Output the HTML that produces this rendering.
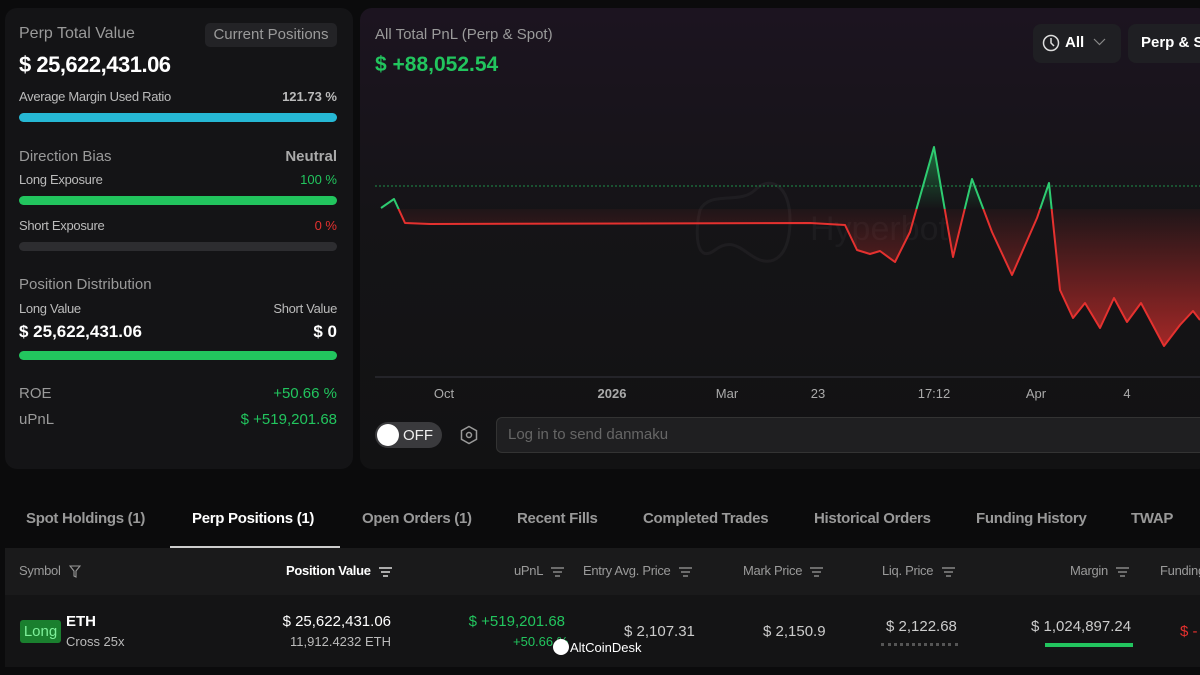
<!DOCTYPE html>
<html><head><meta charset="utf-8"><style>
*{margin:0;padding:0;box-sizing:border-box}
body{width:1200px;height:675px;overflow:hidden;background:#0b0b0c;font-family:"Liberation Sans",sans-serif;color:#ddd;position:relative}
.abs{position:absolute;white-space:nowrap}
.card{position:absolute;border-radius:12px}
.g{color:#22c55e}.r{color:#e5312f}.m{color:#9a9a9a}
.bar{position:absolute;height:9px;border-radius:5px}
.th{position:absolute;top:563px;font-size:13px;color:#9a9a9a;letter-spacing:-0.3px}
.fi{display:inline-block;vertical-align:middle;margin-left:5px}
.tab{position:absolute;top:510px;font-size:15px;color:#999;letter-spacing:-0.3px;font-weight:bold}
</style></head><body>
<div class="card" style="left:5px;top:8px;width:348px;height:461px;background:#141416"></div>
<div class="card" style="left:360px;top:8px;width:850px;height:461px;background:linear-gradient(180deg,#1c1420 0%,#151417 45%,#121213 100%)"></div>

<div class="abs m" style="left:19px;top:25px;font-size:16px">Perp Total Value</div>
<div class="abs" style="left:205px;top:23px;width:132px;height:24px;background:#232326;border-radius:5px;font-size:15px;color:#9a9a9a;text-align:center;line-height:24px">Current Positions</div>
<div class="abs" style="left:19px;top:52px;font-size:22px;font-weight:bold;color:#fff;letter-spacing:-0.5px">$ 25,622,431.06</div>
<div class="abs" style="left:19px;top:89px;font-size:13px;color:#bbb;letter-spacing:-0.3px">Average Margin Used Ratio</div>
<div class="abs" style="right:863px;top:89px;font-size:13px;color:#bbb;font-weight:bold">121.73 %</div>
<div class="bar" style="left:19px;top:113px;width:318px;background:#26b8d4"></div>
<div class="abs m" style="left:19px;top:148px;font-size:15px">Direction Bias</div>
<div class="abs" style="right:863px;top:148px;font-size:15px;font-weight:bold;color:#aaa">Neutral</div>
<div class="abs" style="left:19px;top:172px;font-size:13px;color:#bbb;letter-spacing:-0.3px">Long Exposure</div>
<div class="abs g" style="right:863px;top:172px;font-size:13px">100 %</div>
<div class="bar" style="left:19px;top:196px;width:318px;background:#22c55e"></div>
<div class="abs" style="left:19px;top:218px;font-size:13px;color:#bbb;letter-spacing:-0.3px">Short Exposure</div>
<div class="abs r" style="right:863px;top:218px;font-size:13px">0 %</div>
<div class="bar" style="left:19px;top:242px;width:318px;background:#2d2d30"></div>
<div class="abs m" style="left:19px;top:276px;font-size:15px">Position Distribution</div>
<div class="abs" style="left:19px;top:301px;font-size:13px;color:#bbb;letter-spacing:-0.3px">Long Value</div>
<div class="abs" style="right:863px;top:301px;font-size:13px;color:#bbb;letter-spacing:-0.3px">Short Value</div>
<div class="abs" style="left:19px;top:322px;font-size:17px;font-weight:bold;color:#fff">$ 25,622,431.06</div>
<div class="abs" style="right:863px;top:322px;font-size:17px;font-weight:bold;color:#fff">$ 0</div>
<div class="bar" style="left:19px;top:351px;width:318px;background:#22c55e"></div>
<div class="abs m" style="left:19px;top:385px;font-size:15px">ROE</div>
<div class="abs g" style="right:863px;top:385px;font-size:15px">+50.66 %</div>
<div class="abs m" style="left:19px;top:411px;font-size:15px">uPnL</div>
<div class="abs g" style="right:863px;top:411px;font-size:15px">$ +519,201.68</div>

<div class="abs m" style="left:375px;top:26px;font-size:15px">All Total PnL (Perp &amp; Spot)</div>
<div class="abs g" style="left:375px;top:53px;font-size:21px;font-weight:bold">$ +88,052.54</div>
<div class="abs" style="left:1033px;top:24px;width:88px;height:39px;background:#1f1f23;border-radius:8px"></div>
<svg class="abs" style="left:1042px;top:34px" width="18" height="18" viewBox="0 0 18 18"><circle cx="9" cy="9" r="7.5" fill="none" stroke="#ddd" stroke-width="1.5"/><path d="M9 4v5l3 3" fill="none" stroke="#ddd" stroke-width="1.5"/></svg>
<div class="abs" style="left:1065px;top:34px;font-size:15px;font-weight:bold;color:#fff">All</div>
<svg class="abs" style="left:1093px;top:38px" width="13" height="9"><path d="M1 1l5.5 5.5L12 1" fill="none" stroke="#888" stroke-width="1.2"/></svg>
<div class="abs" style="left:1128px;top:24px;width:90px;height:39px;background:#1f1f23;border-radius:8px"></div>
<div class="abs" style="left:1141px;top:34px;font-size:15px;font-weight:bold;color:#fff">Perp &amp; Spot</div>

<svg class="abs" style="left:0;top:0" width="1200" height="470">
<defs>
<linearGradient id="rf" x1="0" y1="209" x2="0" y2="350" gradientUnits="userSpaceOnUse"><stop offset="0" stop-color="#e5312f" stop-opacity="0.05"/><stop offset="1" stop-color="#e5312f" stop-opacity="0.7"/></linearGradient>
<linearGradient id="gf" x1="0" y1="147" x2="0" y2="209" gradientUnits="userSpaceOnUse"><stop offset="0" stop-color="#22c55e" stop-opacity="0.5"/><stop offset="1" stop-color="#22c55e" stop-opacity="0"/></linearGradient>
<clipPath id="up"><rect x="0" y="0" width="1200" height="209"/></clipPath>
<clipPath id="dn"><rect x="0" y="209" width="1200" height="260"/></clipPath>
</defs>
<g opacity="0.06" fill="none" stroke="#bbb" stroke-width="3"><path d="M700 210c10-20 40-5 55-20s35-5 35 30-15 45-30 40-25-25-45-10-20-20-15-40z"/><text x="810" y="240" font-size="34" fill="#999" stroke="none" font-family="Liberation Sans">Hyperbot</text></g>
<line x1="375" y1="186" x2="1200" y2="186" stroke="#22c55e" stroke-width="1" stroke-dasharray="2,2" opacity="0.7"/>
<line x1="375" y1="377" x2="1200" y2="377" stroke="#2a2a30" stroke-width="1.5"/>
<g clip-path="url(#dn)"><polygon fill="url(#rf)" points="381,209 381,208 394,199 405,223 430,224 810,223 845,225 857,250 870,254 880,251 895,262 910,232 934,147 953,257 972,179 992,232 1012,275 1037,218 1049,183 1060,290 1073,318 1085,303 1100,328 1114,298 1127,322 1141,303 1164,346 1180,325 1193,311 1200,320 1200,209"/></g>
<g clip-path="url(#up)"><polygon fill="url(#gf)" points="381,209 381,208 394,199 405,223 430,224 810,223 845,225 857,250 870,254 880,251 895,262 910,232 934,147 953,257 972,179 992,232 1012,275 1037,218 1049,183 1060,290 1073,318 1085,303 1100,328 1114,298 1127,322 1141,303 1164,346 1180,325 1193,311 1200,320 1200,209"/></g>
<g fill="none" stroke-width="2" stroke-linejoin="round">
<polyline clip-path="url(#dn)" stroke="#e5312f" points="381,208 394,199 405,223 430,224 810,223 845,225 857,250 870,254 880,251 895,262 910,232 934,147 953,257 972,179 992,232 1012,275 1037,218 1049,183 1060,290 1073,318 1085,303 1100,328 1114,298 1127,322 1141,303 1164,346 1180,325 1193,311 1200,320"/>
<polyline clip-path="url(#up)" stroke="#2ecc71" points="381,208 394,199 405,223 430,224 810,223 845,225 857,250 870,254 880,251 895,262 910,232 934,147 953,257 972,179 992,232 1012,275 1037,218 1049,183 1060,290 1073,318 1085,303 1100,328 1114,298 1127,322 1141,303 1164,346 1180,325 1193,311 1200,320"/>
</g>
<g font-size="13" fill="#aaa" font-family="Liberation Sans" text-anchor="middle"><text x="444" y="398">Oct</text><text x="612" y="398" font-weight="bold">2026</text><text x="727" y="398">Mar</text><text x="818" y="398">23</text><text x="934" y="398">17:12</text><text x="1036" y="398">Apr</text><text x="1127" y="398">4</text></g>
</svg>

<div class="abs" style="left:375px;top:422px;width:67px;height:26px;background:#3a3a3d;border-radius:13px"></div>
<div class="abs" style="left:377px;top:424px;width:22px;height:22px;background:#fff;border-radius:11px"></div>
<div class="abs" style="left:403px;top:427px;font-size:15px;color:#eee">OFF</div>
<svg class="abs" style="left:459px;top:425px" width="20" height="20"><path d="M10 1.5l7.5 4.2v8.6L10 18.5l-7.5-4.2V5.7z" fill="none" stroke="#999" stroke-width="1.5"/><circle cx="10" cy="10" r="2.5" fill="none" stroke="#999" stroke-width="1.5"/></svg>
<div class="abs" style="left:496px;top:417px;width:720px;height:36px;background:#1f1f21;border:1px solid #333;border-radius:6px"></div>
<div class="abs" style="left:508px;top:426px;font-size:15px;color:#666">Log in to send danmaku</div>

<div class="tab" style="left:26px">Spot Holdings (1)</div>
<div class="tab" style="left:192px;color:#fff">Perp Positions (1)</div>
<div class="tab" style="left:362px">Open Orders (1)</div>
<div class="tab" style="left:517px">Recent Fills</div>
<div class="tab" style="left:643px">Completed Trades</div>
<div class="tab" style="left:814px">Historical Orders</div>
<div class="tab" style="left:976px">Funding History</div>
<div class="tab" style="left:1131px">TWAP</div>
<div class="abs" style="top:546px;left:170px;width:170px;height:2px;background:#ccc"></div>

<div class="abs" style="top:548px;left:5px;width:1200px;height:47px;background:#1a1a1b"></div>
<div class="abs" style="top:595px;left:5px;width:1200px;height:72px;background:#141415"></div>
<div class="th" style="left:19px">Symbol <svg class="fi" width="12" height="13"><path d="M1 1h10L7 6v6L5 11V6z" fill="none" stroke="#999" stroke-width="1.1"/></svg></div>
<div class="th" style="left:286px;color:#fff;font-weight:bold">Position Value <svg class="fi" width="13" height="10"><path d="M0 1h13M2 5h9M4 9h5" stroke="#ddd" stroke-width="1.4"/></svg></div>
<div class="th" style="left:514px">uPnL <svg class="fi" width="13" height="10"><path d="M0 1h13M2 5h9M4 9h5" stroke="#888" stroke-width="1.4"/></svg></div>
<div class="th" style="left:583px">Entry Avg. Price <svg class="fi" width="13" height="10"><path d="M0 1h13M2 5h9M4 9h5" stroke="#888" stroke-width="1.4"/></svg></div>
<div class="th" style="left:743px">Mark Price <svg class="fi" width="13" height="10"><path d="M0 1h13M2 5h9M4 9h5" stroke="#888" stroke-width="1.4"/></svg></div>
<div class="th" style="left:882px">Liq. Price <svg class="fi" width="13" height="10"><path d="M0 1h13M2 5h9M4 9h5" stroke="#888" stroke-width="1.4"/></svg></div>
<div class="th" style="left:1070px">Margin <svg class="fi" width="13" height="10"><path d="M0 1h13M2 5h9M4 9h5" stroke="#888" stroke-width="1.4"/></svg></div>
<div class="th" style="left:1160px">Funding</div>

<div class="abs" style="left:20px;top:620px;width:41px;height:23px;background:#1a7f2e;border-radius:3px;color:#7ef09a;font-size:15px;text-align:center;line-height:23px">Long</div>
<div class="abs" style="left:66px;top:613px;font-size:15px;font-weight:bold;color:#fff">ETH</div>
<div class="abs" style="left:66px;top:634px;font-size:13px;color:#bbb">Cross 25x</div>
<div class="abs" style="right:809px;top:613px;font-size:15px;color:#fff">$ 25,622,431.06</div>
<div class="abs" style="right:809px;top:634px;font-size:13px;color:#bbb">11,912.4232 ETH</div>
<div class="abs g" style="right:635px;top:613px;font-size:15px">$ +519,201.68</div>
<div class="abs g" style="left:513px;top:634px;font-size:13px">+50.66 %</div>
<div class="abs" style="left:553px;top:639px;width:16px;height:16px;border-radius:8px;background:#fff"></div>
<div class="abs" style="left:570px;top:640px;font-size:13px;color:#fff">AltCoinDesk</div>
<div class="abs" style="left:624px;top:623px;font-size:15px;color:#ccc">$ 2,107.31</div>
<div class="abs" style="left:763px;top:623px;font-size:15px;color:#ccc">$ 2,150.9</div>
<div class="abs" style="left:886px;top:618px;font-size:15px;color:#ccc">$ 2,122.68</div>
<div class="abs" style="left:881px;top:643px;width:77px;border-top:3px dotted #555"></div>
<div class="abs" style="left:1031px;top:618px;font-size:15px;color:#ccc">$ 1,024,897.24</div>
<div class="abs" style="left:1045px;top:643px;width:88px;height:4px;background:#22c55e"></div>
<div class="abs r" style="left:1180px;top:623px;font-size:15px">$ -</div>
</body></html>
